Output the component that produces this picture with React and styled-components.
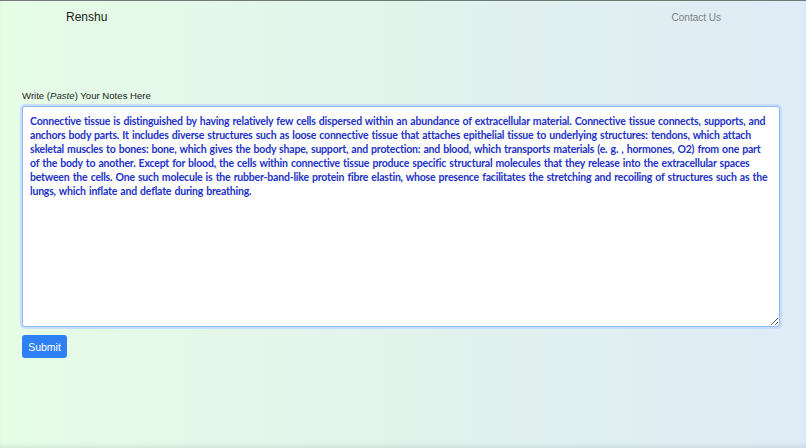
import React, { useState } from 'react';
import styled, { createGlobalStyle } from 'styled-components';

const NOTES =
  'Connective tissue is distinguished by having relatively few cells dispersed within an abundance of extracellular material. Connective tissue connects, supports, and anchors body parts. It includes diverse structures such as loose connective tissue that attaches epithelial tissue to underlying structures: tendons, which attach skeletal muscles to bones: bone, which gives the body shape, support, and protection: and blood, which transports materials (e. g. , hormones, O2) from one part of the body to another. Except for blood, the cells within connective tissue produce specific structural molecules that they release into the extracellular spaces between the cells. One such molecule is the rubber-band-like protein fibre elastin, whose presence facilitates the stretching and recoiling of structures such as the lungs, which inflate and deflate during breathing.';

const GlobalStyle = createGlobalStyle`
  html, body {
    margin: 0;
    padding: 0;
    height: 100%;
  }
  body {
    font-family: "Liberation Sans", Arial, sans-serif;
    background: linear-gradient(90deg, #e6fde6 0%, #e2f3ec 50%, #dfebf6 100%);
    border-top: 1px solid #6f7a74;
    box-sizing: border-box;
    box-shadow: inset 0 -4px 5px -2px rgba(60, 90, 90, 0.12);
    overflow: hidden;
  }
  #root {
    height: 100%;
  }
`;

const Page = styled.div`
  height: 100%;
  display: flex;
  flex-direction: column;
`;

const Nav = styled.nav`
  height: 32px;
  display: flex;
  align-items: center;
  justify-content: space-between;
  padding: 0 85px 0 66px;
`;

const Brand = styled.div`
  font-size: 12px;
  color: #222;
`;

const NavLink = styled.a`
  font-size: 10px;
  color: #7a7f82;
  text-decoration: none;
  cursor: pointer;
`;

const Main = styled.main`
  padding: 57px 26px 0 22px;
  display: flex;
  flex-direction: column;
`;

const Label = styled.label`
  font-size: 9.6px;
  color: #222;
  margin-bottom: 5px;
  em {
    font-style: italic;
  }
`;

const Notes = styled.textarea`
  box-sizing: border-box;
  width: 100%;
  height: 221px;
  resize: both;
  padding: 7px 7px 4px;
  border: 1px solid #8fbaf3;
  border-radius: 3px;
  box-shadow: 0 0 0 2px #c6ddfb;
  background: #fff;
  color: #2232c8;
  font-family: "Lato", sans-serif;
  font-weight: 700;
  font-size: 10.5px;
  letter-spacing: -0.2px;
  word-spacing: 0.8px;
  line-height: 14px;
  outline: none;
`;

const Submit = styled.button`
  align-self: flex-start;
  margin-top: 8px;
  width: 45px;
  height: 23px;
  padding: 0;
  border: none;
  border-radius: 3px;
  background: #2f80f5;
  color: #fff;
  font-family: "Liberation Sans", Arial, sans-serif;
  font-size: 10.5px;
  cursor: pointer;
`;

export default function App() {
  const [text, setText] = useState(NOTES);
  return (
    <Page>
      <GlobalStyle />
      <Nav>
        <Brand>Renshu</Brand>
        <NavLink>Contact Us</NavLink>
      </Nav>
      <Main>
        <Label>
          Write (<em>Paste</em>) Your Notes Here
        </Label>
        <Notes value={text} onChange={(e) => setText(e.target.value)} spellCheck={false} />
        <Submit>Submit</Submit>
      </Main>
    </Page>
  );
}
